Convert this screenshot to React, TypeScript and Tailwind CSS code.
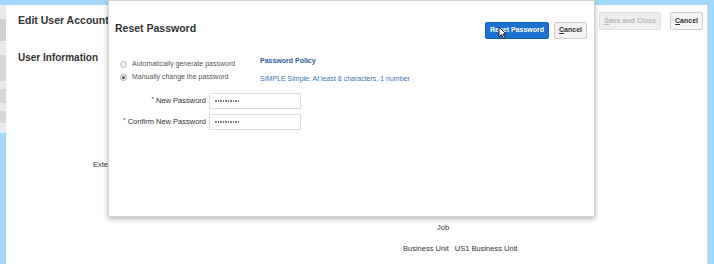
export default function App() {
  const dots = Array.from({ length: 10 });
  return (
    <div
      className="relative w-[714px] h-[264px] overflow-hidden bg-[#a3d8fc] text-[#333]"
      style={{ fontFamily: '"Liberation Sans", Arial, sans-serif' }}
    >
      <div className="flex h-full pt-[5px]">
        {/* left gutter */}
        <div className="w-[6px] flex flex-col">
          <div className="h-[128px] bg-[#e9ecef] flex flex-col gap-[8px] pt-[14px]">
            <div className="h-[22px] bg-[#cfd3d6]" />
            <div className="h-[26px] bg-[#d6d9dc] mt-[6px]" />
            <div className="h-[14px] bg-[#d6d9dc]" />
            <div className="h-[12px] bg-[#d6d9dc]" />
          </div>
        </div>

        {/* page behind the dialog */}
        <div className="w-[702px] bg-white border-r border-[#c9dde9] pl-3 pr-[4px]">
          <div className="flex items-center justify-between pt-[7px]">
            <h1 className="text-[10.5px] font-bold text-[#333]">Edit User Account:</h1>
            <div className="flex gap-[9px]">
              <button className="h-[18px] px-[4px] text-[7px] font-bold text-[#b7b7b7] bg-[#eeeeee] border border-[#e1e1e1] rounded-[2px]">
                <span className="underline">S</span>ave and Close
              </button>
              <button className="h-[18px] px-[4px] text-[7px] font-bold text-[#333] bg-[#f4f4f4] border border-[#cfcfcf] rounded-[2px]">
                <span className="underline">C</span>ancel
              </button>
            </div>
          </div>
          <h2 className="mt-[20px] text-[10px] font-bold text-[#333]">User Information</h2>
          <div className="mt-[94px] ml-[75px] text-[7.5px] text-[#333]">Exte</div>
          <div className="mt-[52px] ml-[419px] text-[7.5px] text-[#333]">Job</div>
          <div className="mt-[9px] ml-[385px] flex gap-[6px] text-[7.5px] text-[#333]">
            <span>Business Unit</span>
            <span>US1 Business Unit</span>
          </div>
        </div>
      </div>

      {/* modal dialog */}
      <div className="absolute left-[108px] top-0 w-[487px] h-[217px] bg-white border border-[#d3d3d3] shadow-[0_2px_5px_rgba(0,0,0,0.3)]">
        <div className="flex items-start justify-between pl-[6px] pr-[7px] pt-[20px]">
          <h3 className="text-[10.5px] font-bold text-[#333]">Reset Password</h3>
          <div className="flex gap-[5px] pt-[1px]">
            <button className="h-[17px] px-[4px] text-[7px] font-bold text-white bg-[#1b72cf] border border-[#1565bb] rounded-[2px]">
              Reset Password
            </button>
            <button className="h-[17px] px-[4px] text-[7px] font-bold text-[#333] bg-[#f2f2f2] border border-[#cfcfcf] rounded-[2px]">
              <span className="underline">C</span>ancel
            </button>
          </div>
        </div>

        <div className="flex mt-[21px] pl-[11px]">
          <div className="w-[140px] flex flex-col gap-[5px] text-[7px] text-[#555]">
            <label className="flex items-center gap-[5px] h-[8px]">
              <span className="w-[7px] h-[7px] rounded-full border border-[#b5b5b5] bg-[#f0f0f0]" />
              Automatically generate password
            </label>
            <label className="flex items-center gap-[5px] h-[8px]">
              <span className="w-[7px] h-[7px] rounded-full border border-[#a5a5a5] bg-[#f0f0f0] flex items-center justify-center">
                <span className="w-[3px] h-[3px] rounded-full bg-[#555]" />
              </span>
              Manually change the password
            </label>
          </div>
          <div className="flex flex-col gap-[7px] -mt-[4px]">
            <span className="text-[7px] font-bold text-[#2c5e9e]">Password Policy</span>
            <span className="text-[7px] text-[#3b78b8]">SIMPLE Simple: At least 8 characters, 1 number</span>
          </div>
        </div>

        <div className="mt-[9px] flex flex-col gap-[5px]">
          {["New Password", "Confirm New Password"].map((l) => (
            <div key={l} className="flex items-center">
              <span className="w-[97px] text-right text-[7.5px] text-[#333]">
                <span className="align-top text-[6px]">*</span> {l}
              </span>
              <div className="ml-[3px] w-[92px] h-[16px] border border-[#dcdcdc] bg-white flex items-center gap-[1px] pl-[5px]">
                {dots.map((_, i) => (
                  <span key={i} className="w-[1.5px] h-[1.5px] rounded-full bg-[#555]" />
                ))}
              </div>
            </div>
          ))}
        </div>
      </div>

      {/* mouse pointer */}
      <svg className="absolute left-[498px] top-[26px]" width="9" height="13" viewBox="0 0 9 13">
        <path d="M1 1 L1 11 L3.5 8.5 L5.5 12.5 L7 11.8 L5 8 L8 8 Z" fill="#fff" stroke="#111" strokeWidth="0.9" />
      </svg>
    </div>
  );
}
